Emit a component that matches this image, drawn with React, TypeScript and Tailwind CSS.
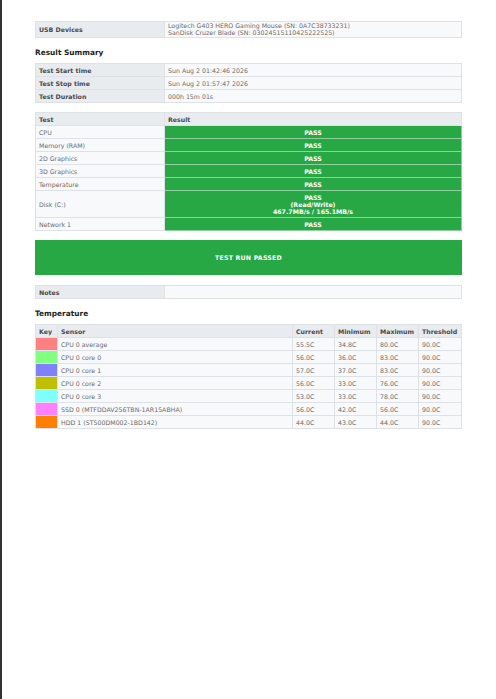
import React from "react";

interface ITestRow {
  name: string;
  lines: Array<string>;
}

interface ISensor {
  color: string;
  name: string;
  current: string;
  min: string;
  max: string;
  threshold: string;
}

const testRows: Array<ITestRow> = [
  { name: "CPU", lines: ["PASS"] },
  { name: "Memory (RAM)", lines: ["PASS"] },
  { name: "2D Graphics", lines: ["PASS"] },
  { name: "3D Graphics", lines: ["PASS"] },
  { name: "Temperature", lines: ["PASS"] },
  { name: "Disk (C:)", lines: ["PASS", "(Read/Write)", "467.7MB/s / 165.1MB/s"] },
  { name: "Network 1", lines: ["PASS"] },
];

const sensors: Array<ISensor> = [
  { color: "bg-[#ff8080]", name: "CPU 0 average", current: "55.5C", min: "34.8C", max: "80.0C", threshold: "90.0C" },
  { color: "bg-[#80ff80]", name: "CPU 0 core 0", current: "56.0C", min: "36.0C", max: "83.0C", threshold: "90.0C" },
  { color: "bg-[#8080ff]", name: "CPU 0 core 1", current: "57.0C", min: "37.0C", max: "83.0C", threshold: "90.0C" },
  { color: "bg-[#c0c000]", name: "CPU 0 core 2", current: "56.0C", min: "33.0C", max: "76.0C", threshold: "90.0C" },
  { color: "bg-[#80ffff]", name: "CPU 0 core 3", current: "53.0C", min: "33.0C", max: "78.0C", threshold: "90.0C" },
  { color: "bg-[#ff80ff]", name: "SSD 0 (MTFDDAV256TBN-1AR15ABHA)", current: "56.0C", min: "42.0C", max: "56.0C", threshold: "90.0C" },
  { color: "bg-[#ff8000]", name: "HDD 1 (ST500DM002-1BD142)", current: "44.0C", min: "43.0C", max: "44.0C", threshold: "90.0C" },
];

// cells
const th = "h-[13px] p-0 px-[3px] text-left font-bold text-[#4a4a4a] bg-[#e9ecef] border border-[#dee2e6] align-middle";
const td = "h-[13px] p-0 px-[3px] text-[#6c6c6c] bg-[#f8f9fa] border border-[#dee2e6] align-middle";

function InfoRow(props: { label: string; children: React.ReactNode; tall?: boolean }) {
  return (
    <tr>
      <td className={`${th} w-[129px] ${props.tall ? "h-[16px]" : ""}`}>{props.label}</td>
      <td className={`${td} ${props.tall ? "h-[16px] leading-[6.5px]" : ""}`}>{props.children}</td>
    </tr>
  );
}

function App() {
  return (
    <div
      className="min-h-[699px] bg-white border-l-2 border-[#333] text-[6.25px] leading-[7px]"
      style={{ fontFamily: '"DejaVu Sans", Verdana, sans-serif' }}
    >
      <div className="ml-[33px] w-[427px] pt-[21px]">
        <table className="w-full border-collapse">
          <tbody>
            <InfoRow label="USB Devices" tall>
              <div>Logitech G403 HERO Gaming Mouse (SN: 0A7C38733231)</div>
              <div>SanDisk Cruzer Blade (SN: 03024515110425222525)</div>
            </InfoRow>
          </tbody>
        </table>

        <h2 className="mt-[11px] mb-[6px] text-[7.4px] leading-[8px] font-bold text-[#222]">Result Summary</h2>
        <table className="w-full border-collapse">
          <tbody>
            <InfoRow label="Test Start time">Sun Aug 2 01:42:46 2026</InfoRow>
            <InfoRow label="Test Stop time">Sun Aug 2 01:57:47 2026</InfoRow>
            <InfoRow label="Test Duration">000h 15m 01s</InfoRow>
          </tbody>
        </table>

        <table className="w-full border-collapse mt-[9px]">
          <thead>
            <tr>
              <th className={`${th} w-[129px]`}>Test</th>
              <th className={th}>Result</th>
            </tr>
          </thead>
          <tbody>
            {testRows.map((row) => (
              <tr key={row.name}>
                <td className={`${td} bg-[#f8f9fb]`}>{row.name}</td>
                <td
                  className={`${row.lines.length > 1 ? "h-[27px]" : "h-[13px]"} p-0 bg-[#28a745] border border-[#8fd19e] text-center font-bold text-white align-middle leading-[7px]`}
                >
                  {row.lines.map((l) => (
                    <div key={l}>{l}</div>
                  ))}
                </td>
              </tr>
            ))}
          </tbody>
        </table>

        <div className="mt-[9px] h-[35px] bg-[#28a745] flex items-center justify-center font-bold text-white tracking-[0.2px]">
          TEST RUN PASSED
        </div>

        <table className="w-full border-collapse mt-[10px]">
          <tbody>
            <InfoRow label="Notes">{""}</InfoRow>
          </tbody>
        </table>

        <h2 className="mt-[11px] mb-[6px] text-[7.4px] leading-[8px] font-bold text-[#222]">Temperature</h2>
        <table className="w-full border-collapse">
          <thead>
            <tr>
              <th className={`${th} w-[22px]`}>Key</th>
              <th className={th}>Sensor</th>
              <th className={`${th} w-[42px]`}>Current</th>
              <th className={`${th} w-[42px]`}>Minimum</th>
              <th className={`${th} w-[42px]`}>Maximum</th>
              <th className={`${th} w-[43px]`}>Threshold</th>
            </tr>
          </thead>
          <tbody>
            {sensors.map((s) => (
              <tr key={s.name}>
                <td className={`h-[13px] p-0 ${s.color} border border-[#dee2e6]`}></td>
                <td className={td}>{s.name}</td>
                <td className={td}>{s.current}</td>
                <td className={td}>{s.min}</td>
                <td className={td}>{s.max}</td>
                <td className={td}>{s.threshold}</td>
              </tr>
            ))}
          </tbody>
        </table>
      </div>
    </div>
  );
}

export default App;
